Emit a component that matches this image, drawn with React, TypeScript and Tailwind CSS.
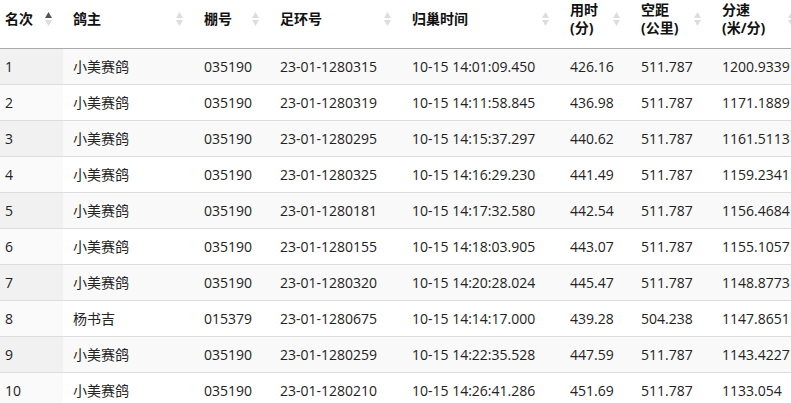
import React from "react";

const rows: string[][] = [
  ["1", "小美赛鸽", "035190", "23-01-1280315", "10-15 14:01:09.450", "426.16", "511.787", "1200.9339"],
  ["2", "小美赛鸽", "035190", "23-01-1280319", "10-15 14:11:58.845", "436.98", "511.787", "1171.1889"],
  ["3", "小美赛鸽", "035190", "23-01-1280295", "10-15 14:15:37.297", "440.62", "511.787", "1161.5113"],
  ["4", "小美赛鸽", "035190", "23-01-1280325", "10-15 14:16:29.230", "441.49", "511.787", "1159.2341"],
  ["5", "小美赛鸽", "035190", "23-01-1280181", "10-15 14:17:32.580", "442.54", "511.787", "1156.4684"],
  ["6", "小美赛鸽", "035190", "23-01-1280155", "10-15 14:18:03.905", "443.07", "511.787", "1155.1057"],
  ["7", "小美赛鸽", "035190", "23-01-1280320", "10-15 14:20:28.024", "445.47", "511.787", "1148.8773"],
  ["8", "杨书吉", "015379", "23-01-1280675", "10-15 14:14:17.000", "439.28", "504.238", "1147.8651"],
  ["9", "小美赛鸽", "035190", "23-01-1280259", "10-15 14:22:35.528", "447.59", "511.787", "1143.4227"],
  ["10", "小美赛鸽", "035190", "23-01-1280210", "10-15 14:26:41.286", "451.69", "511.787", "1133.054"],
];

const headers: { lines: string[]; w: string; pl: string }[] = [
  { lines: ["名次"], w: "w-[63px]", pl: "pl-[5px]" },
  { lines: ["鸽主"], w: "w-[131px]", pl: "pl-[10px]" },
  { lines: ["棚号"], w: "w-[76px]", pl: "pl-[10px]" },
  { lines: ["足环号"], w: "w-[132px]", pl: "pl-[10px]" },
  { lines: ["归巢时间"], w: "w-[158px]", pl: "pl-[10px]" },
  { lines: ["用时", "(分)"], w: "w-[71px]", pl: "pl-[10px]" },
  { lines: ["空距", "(公里)"], w: "w-[81px]", pl: "pl-[10px]" },
  { lines: ["分速", "(米/分)"], w: "w-[94px]", pl: "pl-[10px]" },
];

function SortIcon({ active }: { active?: boolean }) {
  return (
    <svg width="7" height="14" viewBox="0 0 7 14" className="shrink-0">
      <polygon points="3.5,0 7,6 0,6" fill={active ? "#555555" : "#dddddd"} />
      <polygon points="0,8 7,8 3.5,14" fill="#dddddd" />
    </svg>
  );
}

export default function App() {
  return (
    <div
      className="w-[791px] h-[403px] overflow-hidden bg-white text-[14px] text-[#222]"
      style={{ fontFamily: '"Open Sans", "Noto Sans CJK SC", sans-serif' }}
    >
      <table className="table-fixed border-collapse w-[806px]">
        <thead>
          <tr className="border-b border-[#aaaaaa]">
            {headers.map((h, i) => (
              <th
                key={i}
                className={`${h.w} ${h.pl} pr-[11px] pt-[1px] pb-[11px] text-left font-bold text-[#111] align-middle`}
              >
                <div className="flex items-center justify-between h-[36px]">
                  <div className="leading-[18px]">
                    {h.lines.map((l, j) => (
                      <div key={j} className="whitespace-nowrap">{l}</div>
                    ))}
                  </div>
                  <SortIcon active={i === 0} />
                </div>
              </th>
            ))}
          </tr>
        </thead>
        <tbody>
          {rows.map((r, ri) => {
            const odd = ri % 2 === 0;
            return (
              <tr key={ri} className={`h-[36px] border-b border-[#dddddd] ${odd ? "bg-[#f9f9f9]" : "bg-white"}`}>
                {r.map((c, ci) => (
                  <td
                    key={ci}
                    className={`${ci === 0 ? "pl-[5px]" : "pl-[10px]"} ${
                      ci === 0 ? (odd ? "bg-[#f1f1f1]" : "bg-[#fafafa]") : ""
                    } whitespace-nowrap overflow-hidden align-middle leading-[20px]`}
                  >
                    {c}
                  </td>
                ))}
              </tr>
            );
          })}
        </tbody>
      </table>
    </div>
  );
}
